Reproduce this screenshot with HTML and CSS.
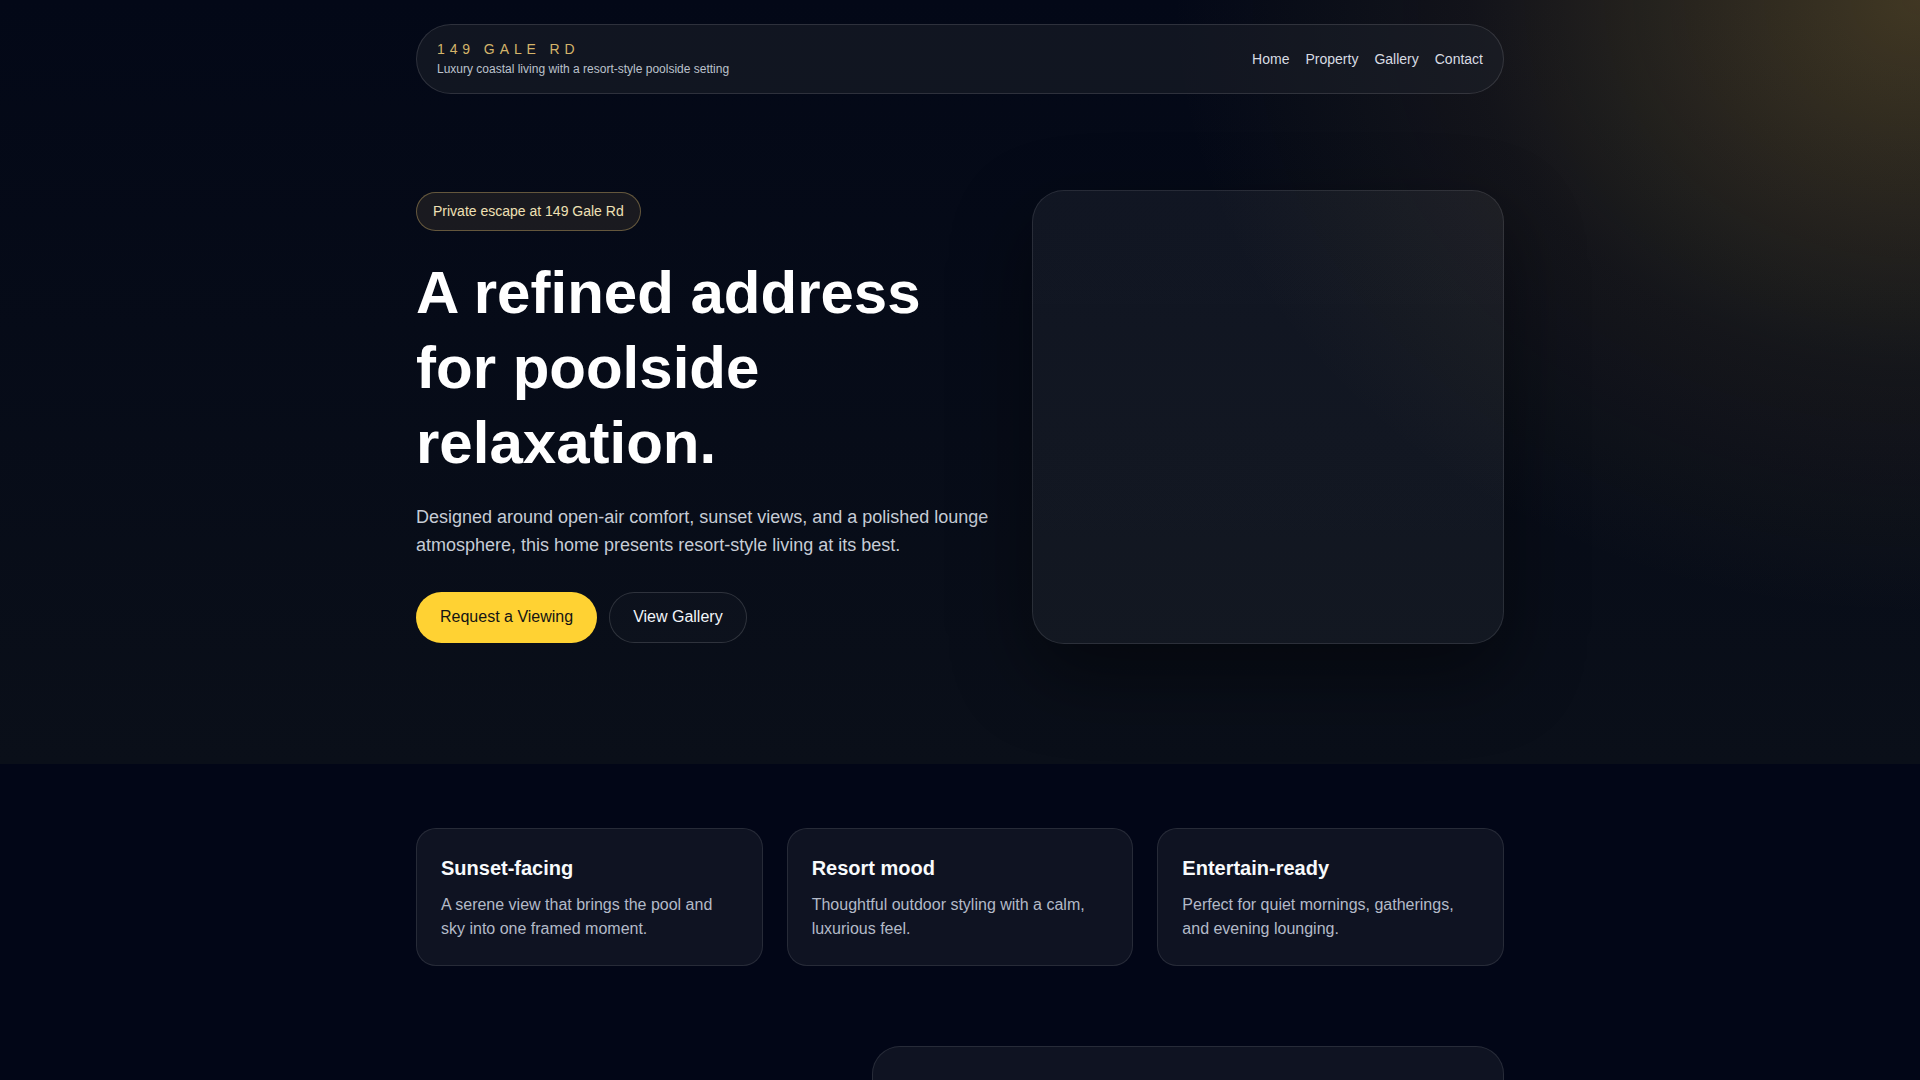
FILE: index.html
```html
<!DOCTYPE html>
<html lang="en">
<head>
    <meta charset="UTF-8">
    <meta name="viewport" content="width=device-width, initial-scale=1.0">
    <title>149 Gale Rd</title>
    <link rel="stylesheet" href="styles.css">
</head>
<body>
    <section class="hero">
        <div class="container">
            <header class="site-header">
                <div class="brand">
                    <span class="brand-name">149 GALE RD</span>
                    <span class="brand-tag">Luxury coastal living with a resort-style poolside setting</span>
                </div>
                <nav class="site-nav">
                    <a href="#home">Home</a>
                    <a href="#property">Property</a>
                    <a href="#gallery">Gallery</a>
                    <a href="#contact">Contact</a>
                </nav>
            </header>

            <div class="hero-grid" id="home">
                <div class="hero-copy">
                    <span class="badge">Private escape at 149 Gale Rd</span>
                    <h1>A refined address for poolside relaxation.</h1>
                    <p class="lead">Designed around open-air comfort, sunset views, and a polished lounge atmosphere, this home presents resort-style living at its best.</p>
                    <div class="actions">
                        <a class="btn btn-primary" href="#contact">Request a Viewing</a>
                        <a class="btn btn-secondary" href="#gallery">View Gallery</a>
                    </div>
                </div>
                <div class="hero-visual"></div>
            </div>
        </div>
    </section>

    <section class="features" id="property">
        <div class="container feature-grid">
            <article class="feature-card">
                <h3>Sunset-facing</h3>
                <p>A serene view that brings the pool and sky into one framed moment.</p>
            </article>
            <article class="feature-card">
                <h3>Resort mood</h3>
                <p>Thoughtful outdoor styling with a calm, luxurious feel.</p>
            </article>
            <article class="feature-card">
                <h3>Entertain-ready</h3>
                <p>Perfect for quiet mornings, gatherings, and evening lounging.</p>
            </article>
        </div>
    </section>

    <section class="split" id="gallery">
        <div class="container split-grid">
            <div class="split-copy"></div>
            <div class="split-card"></div>
        </div>
    </section>
</body>
</html>
```

FILE: styles.css
```css
body {
    margin: 0;
    font-family: "Liberation Sans", Arial, sans-serif;
    background-color: #020617;
    color: #f8fafc;
}
.container {
    width: calc(100% - 48px);
    max-width: 1088px;
    margin: 0 auto;
}
.hero {
    padding: 24px 0 120px;
    background:
        radial-gradient(ellipse 1000px 820px at 100% 0%, rgba(195, 155, 60, 0.32), rgba(190, 150, 60, 0.08) 45%, transparent 75%),
        linear-gradient(180deg, #030817 0%, #0a0f19 100%);
}
.site-header {
    display: flex;
    justify-content: space-between;
    align-items: center;
    padding: 16px 20px;
    border: 1px solid rgba(255, 255, 255, 0.12);
    border-radius: 999px;
    background-color: rgba(30, 33, 42, 0.55);
}
.brand {
    display: flex;
    flex-direction: column;
    gap: 4px;
}
.brand-name {
    font-size: 14px;
    line-height: 1.2;
    letter-spacing: 0.35em;
    color: #d4b46a;
}
.brand-tag {
    font-size: 12px;
    line-height: 1.3;
    color: #bcc2cc;
}
.site-nav {
    display: flex;
    gap: 16px;
}
.site-nav a {
    color: #d8dce3;
    text-decoration: none;
    font-size: 14px;
}
.hero-grid {
    display: grid;
    grid-template-columns: minmax(0, 1.22fr) minmax(0, 1fr);
    gap: 40px;
    align-items: center;
    padding-top: 96px;
}
.badge {
    display: inline-block;
    padding: 10px 16px;
    border: 1px solid rgba(212, 180, 106, 0.4);
    border-radius: 999px;
    background-color: rgba(212, 180, 106, 0.1);
    color: #efe0b5;
    font-size: 14px;
    line-height: 1.2;
}
.hero-copy h1 {
    margin: 24px 0 0;
    font-size: 60px;
    line-height: 1.25;
    font-weight: 700;
    color: #ffffff;
}
.lead {
    margin: 24px 0 0;
    font-size: 18px;
    line-height: 1.55;
    color: #c6ccd6;
}
.actions {
    display: flex;
    gap: 12px;
    margin-top: 32px;
}
.btn {
    padding: 14px 23px;
    border: 1px solid transparent;
    border-radius: 999px;
    font-size: 16px;
    line-height: 1.3;
    text-decoration: none;
}
.btn-primary {
    background-color: #ffd233;
    color: #141414;
}
.btn-secondary {
    border-color: rgba(255, 255, 255, 0.14);
    background-color: rgba(255, 255, 255, 0.02);
    color: #f1f5f9;
}
.hero-visual {
    box-sizing: border-box;
    height: 454px;
    border: 1px solid rgba(255, 255, 255, 0.1);
    border-radius: 32px;
    background: linear-gradient(180deg, rgba(255, 255, 255, 0.05), rgba(255, 255, 255, 0.045));
    box-shadow: 0 30px 80px rgba(0, 0, 0, 0.45);
}
.features {
    padding-top: 64px;
}
.feature-grid {
    display: grid;
    grid-template-columns: repeat(3, minmax(0, 1fr));
    gap: 24px;
}
.feature-card {
    padding: 26px 24px 24px;
    border: 1px solid rgba(255, 255, 255, 0.1);
    border-radius: 20px;
    background-color: #0f1322;
}
.feature-card h3 {
    margin: 0 0 12px;
    font-size: 20px;
    line-height: 1.3;
    color: #f8fafc;
}
.feature-card p {
    margin: 0;
    font-size: 16px;
    line-height: 1.5;
    color: #b3bac8;
}
.split {
    padding: 80px 0;
}
.split-grid {
    display: grid;
    grid-template-columns: minmax(0, 1fr) minmax(0, 1.55fr);
    gap: 48px;
    align-items: center;
}
.split-card {
    min-height: 460px;
    border: 1px solid rgba(255, 255, 255, 0.1);
    border-radius: 28px;
    background-color: #0f1322;
}
```
